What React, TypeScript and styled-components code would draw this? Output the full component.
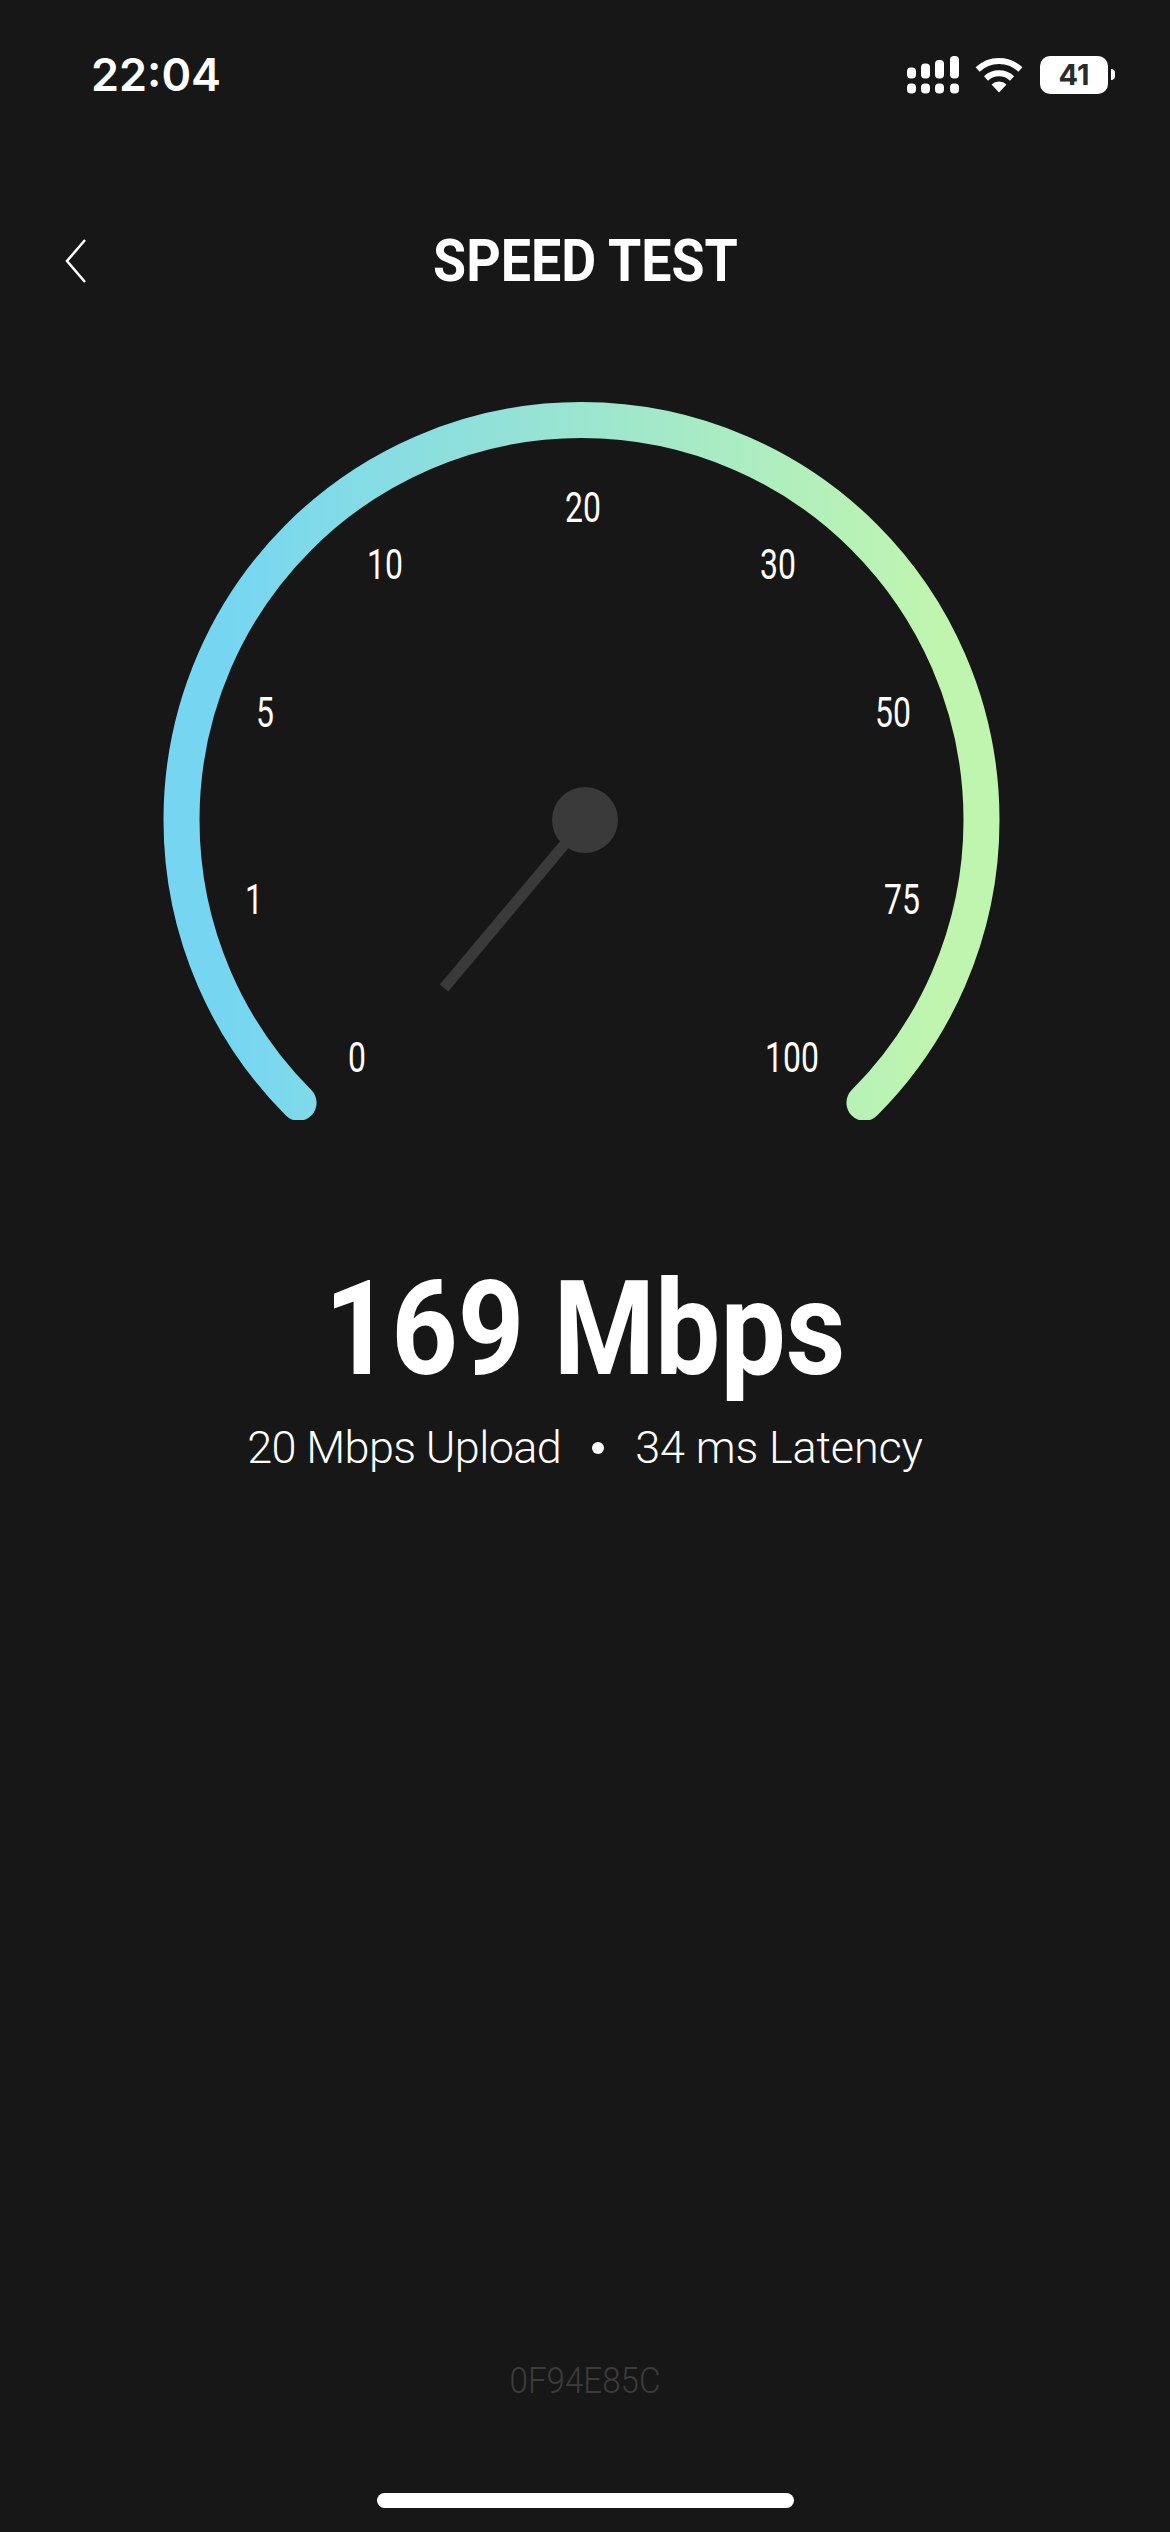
import React from 'react';
import styled, { createGlobalStyle } from 'styled-components';

const Global = createGlobalStyle`
  html, body { margin: 0; padding: 0; background: #171717; }
`;

const Page = styled.div`
  width: 1170px;
  height: 2532px;
  background: #171717;
  color: #fff;
  display: flex;
  flex-direction: column;
  align-items: stretch;
  overflow: hidden;
  font-family: Roboto, "Liberation Sans", sans-serif;
`;

const StatusBar = styled.div`
  height: 54px;
  margin-top: 48px;
  padding: 0 55px 0 91px;
  display: flex;
  align-items: center;
  justify-content: space-between;
`;

const Time = styled.span`
  font-family: Inter, sans-serif;
  font-size: 45px;
  font-weight: 600;
  line-height: 54px;
`;

const StatusIcons = styled.div`
  display: flex;
  align-items: center;
`;

const SignalIcon = styled.svg`
  width: 52px;
  height: 38px;
  display: block;
  margin-right: 16px;
`;

const WifiIcon = styled.svg`
  width: 48px;
  height: 36px;
  display: block;
  margin-right: 17px;
`;

const Battery = styled.div`
  position: relative;
  width: 68px;
  height: 38px;
  border-radius: 10px;
  background: #fff;
  color: #2a2a2a;
  font-family: Inter, sans-serif;
  font-size: 29px;
  font-weight: 700;
  line-height: 38px;
  text-align: center;
  margin-right: 7px;

  &::after {
    content: '';
    position: absolute;
    right: -7px;
    top: 13px;
    width: 4px;
    height: 11px;
    border-radius: 0 6px 6px 0;
    background: #fff;
  }
`;

const NavBar = styled.div`
  height: 60px;
  margin-top: 129px;
  position: relative;
  display: flex;
  align-items: center;
  justify-content: center;
`;

const BackIcon = styled.svg`
  position: absolute;
  left: 64px;
  top: 8px;
  width: 24px;
  height: 44px;
`;

const Title = styled.h1`
  margin: 0;
  font-size: 59px;
  font-weight: 700;
  line-height: 60px;
  white-space: nowrap;
  transform: scaleX(0.91);
`;

const Gauge = styled.div`
  position: relative;
  height: 740px;
  margin-top: 89px;
`;

const GaugeArt = styled.svg`
  display: block;
  width: 1170px;
  height: 740px;
`;

const Tick = styled.span`
  position: absolute;
  font-size: 42px;
  font-weight: 400;
  line-height: 50px;
  transform: translate(-50%, -50%) scaleX(0.76);
  white-space: nowrap;
`;

const Speed = styled.div`
  margin-top: 134px;
  height: 150px;
  text-align: center;
  font-size: 132px;
  font-weight: 700;
  line-height: 150px;
  white-space: nowrap;
  transform: scaleX(0.88);
`;

const Details = styled.div`
  margin-top: 17px;
  height: 54px;
  display: flex;
  justify-content: center;
  align-items: center;
  font-size: 45px;
  font-weight: 300;
  line-height: 54px;
  white-space: nowrap;
`;

const DetailText = styled.span<{ $tracking: number }>`
  letter-spacing: ${(p) => p.$tracking}px;
`;

const Dot = styled.span`
  width: 12px;
  height: 12px;
  border-radius: 50%;
  background: #fff;
  margin: 0 31px;
`;

const Spacer = styled.div`
  flex: 1;
`;

const DeviceCode = styled.div`
  text-align: center;
  font-size: 36px;
  font-weight: 300;
  line-height: 40px;
  color: #3c3c3c;
  transform: scaleX(0.92);
`;

const HomeIndicator = styled.div`
  width: 417px;
  height: 15px;
  border-radius: 8px;
  background: #fff;
  margin: 92px 0 24px 377px;
`;

const ticks = [
  { label: '0', x: 357, y: 1058 },
  { label: '1', x: 254, y: 900 },
  { label: '5', x: 265, y: 713 },
  { label: '10', x: 385, y: 565 },
  { label: '20', x: 583, y: 508 },
  { label: '30', x: 778, y: 565 },
  { label: '50', x: 893, y: 713 },
  { label: '75', x: 902, y: 900 },
  { label: '100', x: 792, y: 1058 },
];

const GAUGE_TOP = 380;

export default function App() {
  return (
    <Page>
      <Global />
      <StatusBar>
        <Time>22:04</Time>
        <StatusIcons>
          <SignalIcon viewBox="0 0 52 38" fill="#fff">
            <rect x="0" y="11.5" width="9" height="11" rx="4" />
            <rect x="14" y="7.5" width="9" height="15" rx="4" />
            <rect x="28" y="4" width="9" height="18.5" rx="4" />
            <rect x="43" y="0" width="9" height="22.5" rx="4" />
            <rect x="0" y="27.5" width="9" height="10" rx="4" />
            <rect x="14" y="27.5" width="9" height="10" rx="4" />
            <rect x="28" y="27.5" width="9" height="10" rx="4" />
            <rect x="43" y="27.5" width="9" height="10" rx="4" />
          </SignalIcon>
          <WifiIcon viewBox="0 0 48 36" fill="none" stroke="#fff">
            <path d="M2.6 12.5A31 31 0 0 1 45.4 12.5" strokeWidth="6" />
            <path d="M11 21.5A19 19 0 0 1 37 21.5" strokeWidth="6" />
            <path d="M16.5 27.5A11 11 0 0 1 31.5 27.5L24 35.5Z" fill="#fff" stroke="none" />
          </WifiIcon>
          <Battery>41</Battery>
        </StatusIcons>
      </StatusBar>
      <NavBar>
        <BackIcon viewBox="0 0 24 44" fill="none" stroke="#fff" strokeWidth="2.5">
          <path d="M21 1 L3 22 L21 43" />
        </BackIcon>
        <Title>SPEED TEST</Title>
      </NavBar>
      <Gauge>
        <GaugeArt viewBox="0 0 1170 740">
          <defs>
            <linearGradient id="arc" gradientUnits="userSpaceOnUse" x1="230" y1="0" x2="935" y2="0">
              <stop offset="0" stopColor="#76d6f1" />
              <stop offset="0.5" stopColor="#9be5d0" />
              <stop offset="1" stopColor="#bff5af" />
            </linearGradient>
          </defs>
          <path
            d="M298.6 722.8 A400 400 0 1 1 864.4 722.8"
            fill="none"
            stroke="url(#arc)"
            strokeWidth="36"
            strokeLinecap="round"
          />
          <line x1="585" y1="440" x2="444" y2="608" stroke="#3a3a3a" strokeWidth="11" />
          <circle cx="585" cy="440" r="33" fill="#3a3a3a" />
        </GaugeArt>
        {ticks.map((t) => (
          <Tick key={t.label} style={{ left: t.x, top: t.y - GAUGE_TOP }}>
            {t.label}
          </Tick>
        ))}
      </Gauge>
      <Speed>169 Mbps</Speed>
      <Details>
        <DetailText $tracking={-0.6}>20 Mbps Upload</DetailText>
        <Dot />
        <DetailText $tracking={-0.15}>34 ms Latency</DetailText>
      </Details>
      <Spacer />
      <DeviceCode>0F94E85C</DeviceCode>
      <HomeIndicator />
    </Page>
  );
}
